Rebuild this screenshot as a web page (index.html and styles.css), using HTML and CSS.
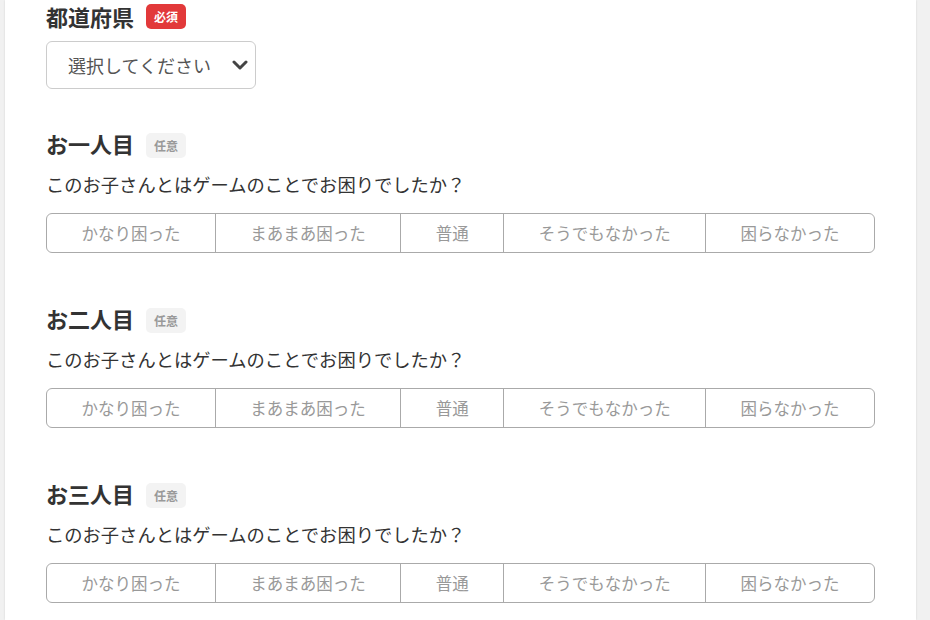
FILE: index.html
```html
<!DOCTYPE html>
<html lang="ja">
<head>
    <meta charset="UTF-8">
    <meta name="viewport" content="width=device-width, initial-scale=1.0">
    <title>アンケート</title>
    <link rel="stylesheet" href="styles.css">
</head>
<body>
    <div class="card">
        <div class="field">
            <div class="field-label">
                <h2>都道府県</h2>
                <span class="badge required">必須</span>
            </div>
            <div class="select-wrap">
                <select class="select">
                    <option>選択してください</option>
                </select>
                <svg class="chevron" width="16" height="12" viewBox="0 0 16 12">
                    <path d="M2 3 L8 9 L14 3" fill="none" stroke="#444" stroke-width="3" stroke-linecap="round" stroke-linejoin="round"/>
                </svg>
            </div>
        </div>

        <div class="field child">
            <div class="field-label">
                <h2>お一人目</h2>
                <span class="badge optional">任意</span>
            </div>
            <p class="question">このお子さんとはゲームのことでお困りでしたか？</p>
            <div class="segments">
                <label class="segment">かなり困った</label>
                <label class="segment">まあまあ困った</label>
                <label class="segment">普通</label>
                <label class="segment">そうでもなかった</label>
                <label class="segment">困らなかった</label>
            </div>
        </div>

        <div class="field child">
            <div class="field-label">
                <h2>お二人目</h2>
                <span class="badge optional">任意</span>
            </div>
            <p class="question">このお子さんとはゲームのことでお困りでしたか？</p>
            <div class="segments">
                <label class="segment">かなり困った</label>
                <label class="segment">まあまあ困った</label>
                <label class="segment">普通</label>
                <label class="segment">そうでもなかった</label>
                <label class="segment">困らなかった</label>
            </div>
        </div>

        <div class="field child">
            <div class="field-label">
                <h2>お三人目</h2>
                <span class="badge optional">任意</span>
            </div>
            <p class="question">このお子さんとはゲームのことでお困りでしたか？</p>
            <div class="segments">
                <label class="segment">かなり困った</label>
                <label class="segment">まあまあ困った</label>
                <label class="segment">普通</label>
                <label class="segment">そうでもなかった</label>
                <label class="segment">困らなかった</label>
            </div>
        </div>
    </div>
</body>
</html>
```

FILE: styles.css
```css
body {
    font-family: "Noto Sans CJK JP", "Noto Sans", sans-serif;
    background-color: #f1f1f1;
    margin: 0;
    color: #333;
}
.card {
    background: white;
    margin-left: 5px;
    width: 911px;
    min-height: 620px;
    box-sizing: border-box;
    padding: 3px 41px 0 41px;
    box-shadow: 0 0 2px rgba(0, 0, 0, 0.12);
}
.field-label {
    display: flex;
    align-items: center;
    gap: 12px;
    height: 26px;
}
.field-label h2 {
    margin: 0;
    font-size: 22px;
    line-height: 26px;
    font-weight: bold;
    color: #333;
}
.badge {
    font-size: 12px;
    font-weight: bold;
    line-height: 25px;
    height: 25px;
    padding: 0 8px;
    border-radius: 5px;
}
.badge.required {
    background: #e2393a;
    color: white;
}
.badge.optional {
    background: #f3f3f3;
    color: #999;
    margin-top: 4px;
}
.select-wrap {
    position: relative;
    width: 210px;
    margin-top: 12px;
}
.select {
    appearance: none;
    -webkit-appearance: none;
    width: 100%;
    height: 48px;
    padding: 0 40px 0 21px;
    border: 1px solid #ccc;
    border-radius: 6px;
    background: white;
    font-family: inherit;
    font-size: 18px;
    color: #555;
}
.chevron {
    position: absolute;
    right: 8px;
    top: 18px;
}
.child {
    margin-top: 41px;
}
.child + .child {
    margin-top: 52px;
}
.question {
    margin: 15px 0 0 0;
    font-size: 18.3px;
    line-height: 26px;
    color: #333;
}
.segments {
    display: flex;
    margin-top: 16px;
    border: 1px solid #aaa;
    border-radius: 6px;
    overflow: hidden;
}
.segment {
    flex: 1 1 auto;
    text-align: center;
    font-size: 16.5px;
    line-height: 38px;
    color: #999;
    white-space: nowrap;
    cursor: pointer;
}
.segment + .segment {
    border-left: 1px solid #aaa;
}
```
